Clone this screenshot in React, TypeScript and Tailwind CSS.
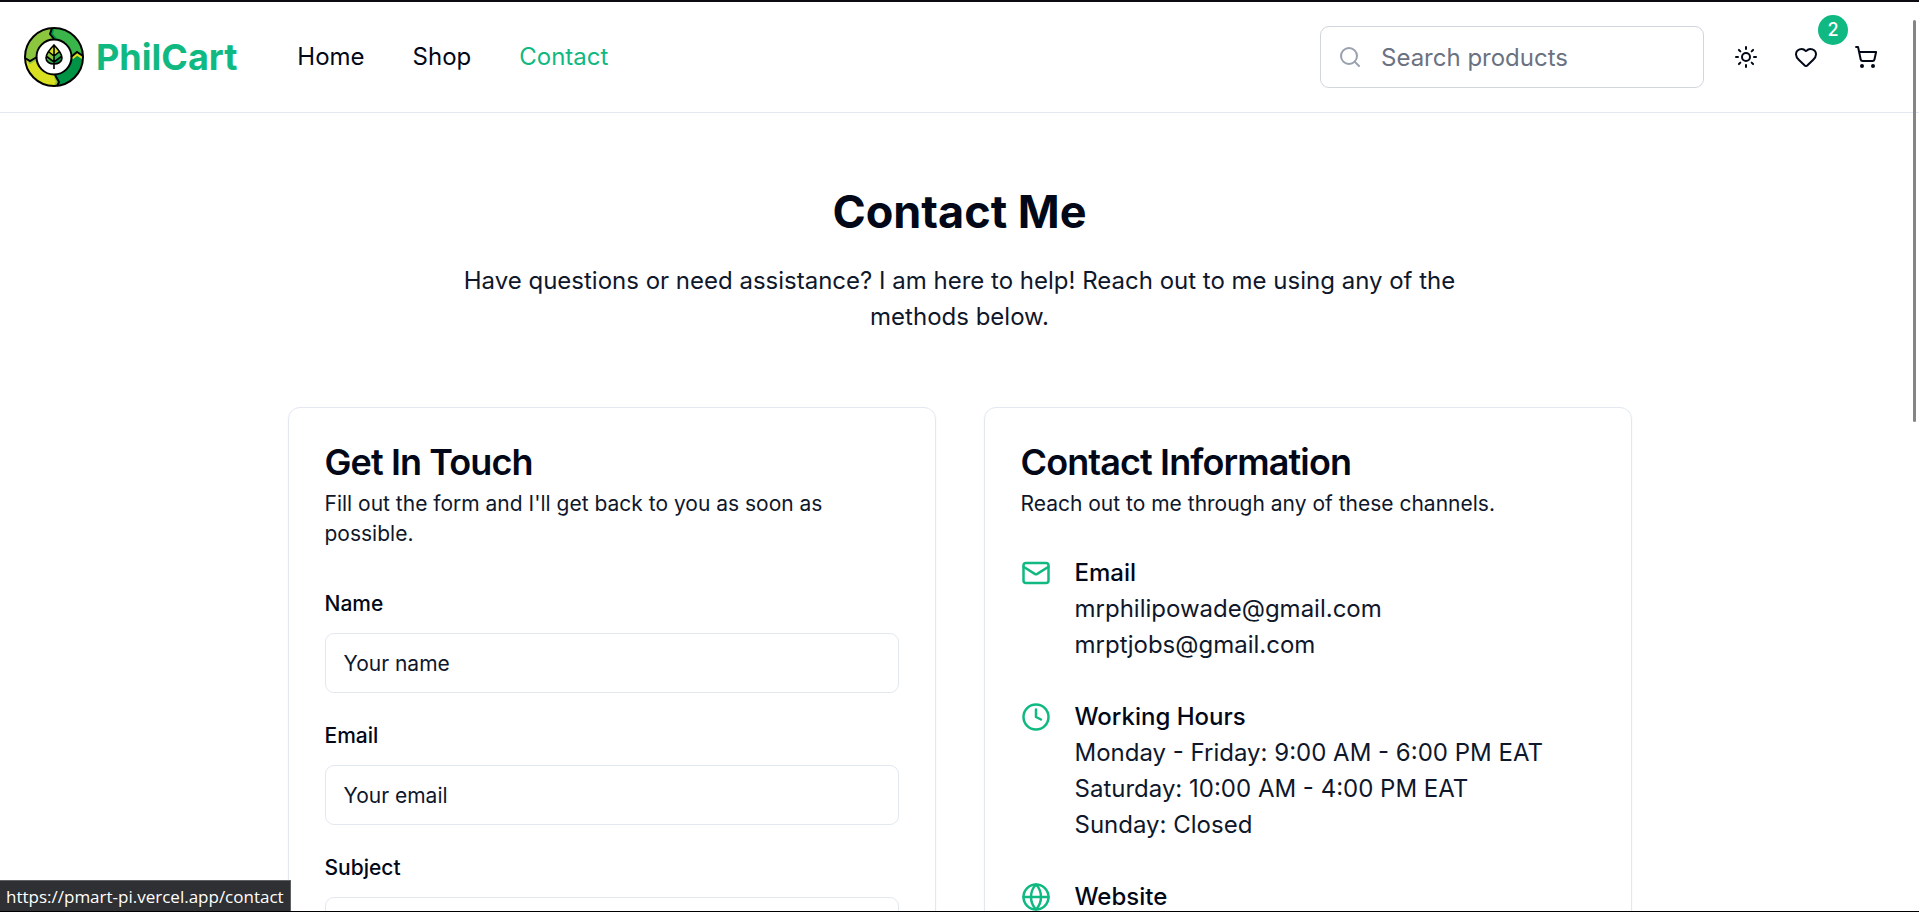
import type { ReactNode } from 'react';
import type { LucideIcon } from 'lucide-react';
import { Clock, Globe, Heart, Mail, Search, ShoppingCart, Sun } from 'lucide-react';

const navLinks = [
  { label: 'Home', href: '/', active: false },
  { label: 'Shop', href: '/shop', active: false },
  { label: 'Contact', href: '/contact', active: true },
];

const fields = [
  { id: 'name', label: 'Name', type: 'text', placeholder: 'Your name' },
  { id: 'email', label: 'Email', type: 'email', placeholder: 'Your email' },
  { id: 'subject', label: 'Subject', type: 'text', placeholder: 'Subject' },
];

const channels: { icon: LucideIcon; title: string; lines: string[] }[] = [
  { icon: Mail, title: 'Email', lines: ['mrphilipowade@gmail.com', 'mrptjobs@gmail.com'] },
  {
    icon: Clock,
    title: 'Working Hours',
    lines: ['Monday - Friday: 9:00 AM - 6:00 PM EAT', 'Saturday: 10:00 AM - 4:00 PM EAT', 'Sunday: Closed'],
  },
  { icon: Globe, title: 'Website', lines: [] },
];

/** Ring of four arrows around a leaf */
function Logo() {
  return (
    <svg className="size-[60px] shrink-0" viewBox="0 0 60 60" fill="none" aria-hidden="true">
      <path d="M28 1A29 29 0 0 0 1 31l5 3 7-4A17.5 17.5 0 0 1 30 12l-4-5z" fill="#8cc63f" />
      <path d="M59 29A29 29 0 0 0 28 1l-2 6 4 5a18 18 0 0 1 18 18l5-5z" fill="#39b54a" />
      <path d="M33 59a29 29 0 0 0 26-30l-6-4-6 5a18 18 0 0 1-16 18l4 7z" fill="#009245" />
      <path d="M1 31a29 29 0 0 0 32 28l2-4-4-7a18 18 0 0 1-18-18l-7 4z" fill="#d9e021" />
      <path d="M48 31l5-4 6 4" stroke="#d9e021" strokeWidth="3" />
      <path d="M3 32l3 4 7-4M31 50l2 5-2 3" stroke="#8cc63f" strokeWidth="2" />
      <path d="M29 2l-1 5 4 5" stroke="#009245" strokeWidth="2" />
      <circle cx="30" cy="30" r="29" stroke="#000" strokeWidth="2" />
      <circle cx="30" cy="30" r="17.5" fill="#fff" stroke="#000" strokeWidth="2" />
      <path d="M28 1l-2 6 4 5M59 29l-6-4-6 5M33 59l2-4-4-7M1 31l5 3 7-4" stroke="#000" strokeWidth="2" />
      <path d="M30 18c-5 5-8 9-8 13 0 4 4 6 8 6z" fill="#8cc63f" />
      <path d="M30 18c5 5 8 9 8 13 0 4-4 6-8 6z" fill="#39b54a" />
      <path d="M30 19l-5 6 5 4 5-4z" fill="#d9e021" />
      <path d="M22 30l8 5v2c-5 0-8-3-8-7z" fill="#39b54a" />
      <path d="M38 30l-8 5v2c5 0 8-3 8-7z" fill="#009245" />
      <path
        d="M30 18c-5 5-8 9-8 13 0 4 4 6 8 6s8-2 8-6c0-4-3-8-8-13zM30 18v24M25 25l5 4 5-4M22 29l8 6 8-6"
        stroke="#000"
        strokeWidth="1.6"
      />
    </svg>
  );
}

function Header() {
  return (
    <header className="flex items-center justify-between border-b border-slate-200 py-6 pr-[23px] pl-6">
      <div className="flex items-center gap-[60px]">
        <a href="/" className="flex items-center gap-3 text-4xl font-bold text-[#10b981]">
          <Logo />
          PhilCart
        </a>
        <nav className="flex items-center gap-12">
          {navLinks.map((link) => (
            <a key={link.label} href={link.href} className={link.active ? 'text-[#10b981]' : 'text-[#020817]'}>
              {link.label}
            </a>
          ))}
        </nav>
      </div>

      <div className="flex items-center gap-3">
        <div className="relative">
          <Search className="absolute top-1/2 left-[18px] size-6 -translate-y-1/2 text-gray-400" />
          <input
            type="search"
            aria-label="Search products"
            placeholder="Search products"
            className="block h-[62px] w-96 rounded-[9px] border border-gray-300 pr-6 pl-[60px] placeholder:text-gray-500"
          />
        </div>
        <div className="flex">
          <button type="button" aria-label="Toggle theme" className="flex size-[60px] items-center justify-center">
            <Sun className="size-6" />
          </button>
          <button type="button" aria-label="Wishlist" className="relative flex size-[60px] items-center justify-center">
            <Heart className="size-6" />
            <span className="absolute -top-3 -right-3 flex size-[30px] items-center justify-center rounded-full bg-[#10b981] text-lg font-medium text-white">
              2
            </span>
          </button>
          <button type="button" aria-label="Cart" className="flex size-[60px] items-center justify-center">
            <ShoppingCart className="size-6" />
          </button>
        </div>
      </div>
    </header>
  );
}

function Card({ title, description, children }: { title: string; description: string; children: ReactNode }) {
  return (
    <section className="rounded-xl border border-slate-200 p-9 shadow-xs">
      <h2 className="text-4xl leading-9 font-semibold tracking-tight">{title}</h2>
      <p className="mt-[9px] mb-9 text-[21px] leading-[30px] text-slate-900">{description}</p>
      {children}
    </section>
  );
}

export default function App() {
  return (
    <div className="h-screen overflow-hidden border-t-2 border-[#0d0b12] bg-white font-[Inter,sans-serif] text-2xl leading-9 text-[#020817]">
      <Header />

      <main className="mx-auto max-w-[1344px] py-[72px]">
        <div className="mb-[72px] text-center">
          <h1 className="mb-6 text-[45px] leading-[54px] font-bold">Contact Me</h1>
          <p className="mx-auto max-w-[1008px] text-slate-900">
            Have questions or need assistance? I am here to help! Reach out to me using any of the methods below.
          </p>
        </div>

        <div className="grid grid-cols-2 gap-12">
          <Card title="Get In Touch" description="Fill out the form and I'll get back to you as soon as possible.">
            <form className="space-y-6">
              {fields.map((field) => (
                <div key={field.id} className="space-y-3">
                  <div>
                    <label htmlFor={field.id} className="text-[21px] leading-none font-medium">
                      {field.label}
                    </label>
                  </div>
                  <input
                    id={field.id}
                    type={field.type}
                    placeholder={field.placeholder}
                    className="block h-[60px] w-full rounded-[9px] border border-slate-200 px-[18px] text-[21px] placeholder:text-slate-900"
                  />
                </div>
              ))}
            </form>
          </Card>

          <Card title="Contact Information" description="Reach out to me through any of these channels.">
            <div className="flex flex-col gap-9">
              {channels.map(({ icon: Icon, title, lines }) => (
                <div key={title} className="flex items-start gap-6">
                  <Icon className="mt-[3px] size-[30px] text-[#10b981]" />
                  <div>
                    <h3 className="font-medium">{title}</h3>
                    {lines.map((line) => (
                      <p key={line} className="text-slate-900">
                        {line}
                      </p>
                    ))}
                  </div>
                </div>
              ))}
            </div>
          </Card>
        </div>
      </main>

      {/* Scroll thumb */}
      <div className="fixed top-5 right-[3px] h-[402px] w-[3px] rounded-full bg-[#858585]" />

      {/* Link preview */}
      <div className="fixed bottom-0 left-0 border-t border-r border-[#5f6063] bg-[#2f3033] px-[6px] font-['Open_Sans',sans-serif] text-[17px] leading-[31px] text-white">
        https://pmart-pi.vercel.app/contact
      </div>
      <div className="fixed inset-x-0 bottom-0 h-px bg-black" />
    </div>
  );
}
